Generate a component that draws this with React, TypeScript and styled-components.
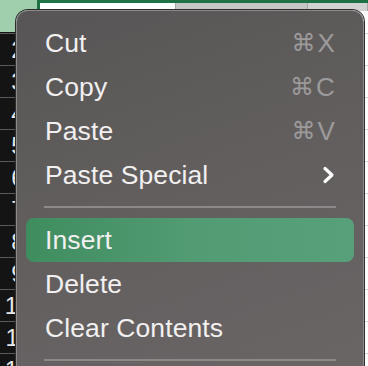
import React from "react";
import styled, { createGlobalStyle } from "styled-components";

const Global = createGlobalStyle`
  html, body { margin: 0; padding: 0; background: #ffffff; }
  body { width: 368px; height: 366px; overflow: hidden; font-family: "Liberation Sans", Arial, sans-serif; }
`;

const Sheet = styled.div`
  position: relative;
  width: 368px;
  height: 366px;
  overflow: hidden;
  background: #ffffff;
  display: grid;
  grid-template-columns: 40px 1fr;
  grid-template-rows: 3px 29px 1fr;
`;

const TopGreenLine = styled.div`
  grid-column: 2;
  grid-row: 1;
  background: #1e7145;
`;

const Corner = styled.div`
  grid-column: 1;
  grid-row: 1 / span 2;
  background: #9fcfac;
  border-right: 3px solid #1e7145;
  box-sizing: border-box;
`;

const HeaderStrip = styled.div`
  grid-column: 2;
  grid-row: 2;
  display: flex;
  align-items: flex-start;
  background: #ffffff;
`;

const HeaderCell = styled.div<{ $w: number; $tone: string }>`
  width: ${(p) => p.$w}px;
  height: 8px;
  background: ${(p) => p.$tone};
  border-right: 1px solid #a8a8a8;
  box-sizing: border-box;
`;

const RowHeaders = styled.div`
  grid-column: 1;
  grid-row: 3;
  background: #141414;
  display: flex;
  flex-direction: column;
  padding-top: 1px;
`;

const RowHead = styled.div`
  height: 32px;
  border-top: 1px solid #5a5a5a;
  box-sizing: border-box;
  display: flex;
  align-items: center;
  justify-content: center;
  padding-right: 4px;
  color: #e8e8e8;
  font-size: 24px;
`;

const Cells = styled.div`
  grid-column: 2;
  grid-row: 3;
  display: flex;
  flex-direction: column;
  padding-top: 1px;
`;

const CellRow = styled.div`
  height: 32px;
  border-top: 1px solid #d4d4d4;
  box-sizing: border-box;
`;

const Menu = styled.div`
  position: absolute;
  left: 16px;
  top: 10px;
  width: 348px;
  height: 380px;
  box-sizing: border-box;
  border-radius: 12px;
  background: linear-gradient(160deg, #575555 0%, #625e5e 45%, #6b6566 100%);
  border: 1px solid #8c8a8a;
  box-shadow: 0 0 0 1px #2c2c2c;
  padding: 10px 9px 0 9px;
  display: flex;
  flex-direction: column;
`;

const Item = styled.div<{ $active?: boolean }>`
  height: 44px;
  flex: none;
  display: flex;
  align-items: center;
  justify-content: space-between;
  padding: 0 19px 0 19px;
  border-radius: 8px;
  background: ${(p) =>
    p.$active ? "linear-gradient(90deg, #3f8d5f 0%, #529b73 50%, #58a07a 100%)" : "transparent"};
  color: #f2f0f0;
  font-size: 26.5px;
  letter-spacing: 0.1px;
`;

const Label = styled.span`
  line-height: 1;
`;

const Shortcut = styled.span`
  color: #9c9a9a;
  display: flex;
  align-items: center;
  gap: 2px;
  font-size: 26px;
`;

const Cmd = styled.span`
  font-family: "DejaVu Sans", sans-serif;
  font-size: 24px;
`;

const Separator = styled.div`
  flex: none;
  height: 21px;
  display: flex;
  align-items: center;
  padding: 0 18px;
  &::after {
    content: "";
    flex: 1;
    height: 2px;
    background: #8d898a;
    margin-top: -1px;
  }
`;

const Chevron = () => (
  <svg width="13" height="18" viewBox="0 0 13 18">
    <polyline points="3,2.5 10,9 3,15.5" fill="none" stroke="#ffffff" strokeWidth="3.2" strokeLinecap="round" strokeLinejoin="round" />
  </svg>
);

const rows = ["2", "3", "4", "5", "6", "7", "8", "9", "10", "11", "12"];

export default function App() {
  return (
    <>
      <Global />
      <Sheet>
        <Corner />
        <TopGreenLine />
        <HeaderStrip>
          <HeaderCell $w={136} $tone="#ffffff" />
          <HeaderCell $w={132} $tone="#c6c6c6" />
          <HeaderCell $w={60} $tone="#d2d2d2" />
        </HeaderStrip>
        <RowHeaders>
          {rows.map((r) => (
            <RowHead key={r}>{r}</RowHead>
          ))}
        </RowHeaders>
        <Cells>
          {rows.map((r) => (
            <CellRow key={r} />
          ))}
        </Cells>
        <Menu>
          <Item>
            <Label>Cut</Label>
            <Shortcut><Cmd>⌘</Cmd>X</Shortcut>
          </Item>
          <Item>
            <Label>Copy</Label>
            <Shortcut><Cmd>⌘</Cmd>C</Shortcut>
          </Item>
          <Item>
            <Label>Paste</Label>
            <Shortcut><Cmd>⌘</Cmd>V</Shortcut>
          </Item>
          <Item>
            <Label>Paste Special</Label>
            <Chevron />
          </Item>
          <Separator />
          <Item $active>
            <Label>Insert</Label>
          </Item>
          <Item>
            <Label>Delete</Label>
          </Item>
          <Item>
            <Label>Clear Contents</Label>
          </Item>
          <Separator />
        </Menu>
      </Sheet>
    </>
  );
}
